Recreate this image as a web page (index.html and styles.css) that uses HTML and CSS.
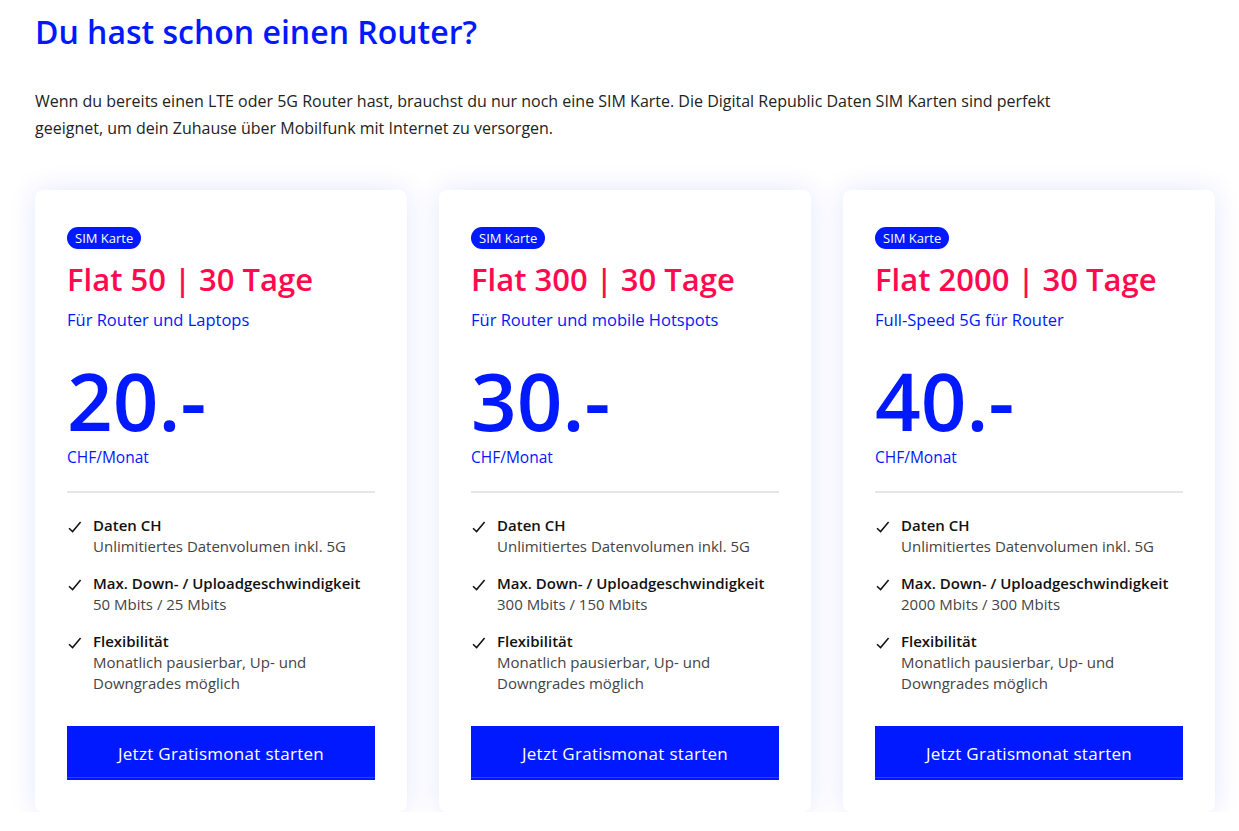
FILE: index.html
```html
<!DOCTYPE html>
<html lang="de">

<head>
  <meta charset="UTF-8">
  <title>Du hast schon einen Router?</title>
  <link rel="stylesheet" href="styles.css">
</head>

<body>
  <section class="router-section">
    <h1 class="section-title">Du hast schon einen Router?</h1>
    <p class="section-intro">Wenn du bereits einen LTE oder 5G Router hast, brauchst du nur noch eine SIM Karte. Die Digital Republic Daten SIM Karten sind perfekt geeignet, um dein Zuhause über Mobilfunk mit Internet zu versorgen.</p>

    <div class="plans">
      <div class="plan-card">
        <span class="badge">SIM Karte</span>
        <h2 class="plan-name">Flat 50 | 30 Tage</h2>
        <p class="plan-sub">Für Router und Laptops</p>
        <div class="price">20.-</div>
        <div class="price-unit">CHF/Monat</div>
        <ul class="features">
          <li>
            <svg class="check" viewBox="0 0 16 16"><path d="M2 9.2 L5.6 12.6 L13.6 3"/></svg>
            <div><strong>Daten CH</strong><span>Unlimitiertes Datenvolumen inkl. 5G</span></div>
          </li>
          <li>
            <svg class="check" viewBox="0 0 16 16"><path d="M2 9.2 L5.6 12.6 L13.6 3"/></svg>
            <div><strong>Max. Down- / Uploadgeschwindigkeit</strong><span>50 Mbits / 25 Mbits</span></div>
          </li>
          <li>
            <svg class="check" viewBox="0 0 16 16"><path d="M2 9.2 L5.6 12.6 L13.6 3"/></svg>
            <div><strong>Flexibilität</strong><span>Monatlich pausierbar, Up- und Downgrades möglich</span></div>
          </li>
        </ul>
        <button class="button">Jetzt Gratismonat starten</button>
      </div>

      <div class="plan-card">
        <span class="badge">SIM Karte</span>
        <h2 class="plan-name">Flat 300 | 30 Tage</h2>
        <p class="plan-sub">Für Router und mobile Hotspots</p>
        <div class="price">30.-</div>
        <div class="price-unit">CHF/Monat</div>
        <ul class="features">
          <li>
            <svg class="check" viewBox="0 0 16 16"><path d="M2 9.2 L5.6 12.6 L13.6 3"/></svg>
            <div><strong>Daten CH</strong><span>Unlimitiertes Datenvolumen inkl. 5G</span></div>
          </li>
          <li>
            <svg class="check" viewBox="0 0 16 16"><path d="M2 9.2 L5.6 12.6 L13.6 3"/></svg>
            <div><strong>Max. Down- / Uploadgeschwindigkeit</strong><span>300 Mbits / 150 Mbits</span></div>
          </li>
          <li>
            <svg class="check" viewBox="0 0 16 16"><path d="M2 9.2 L5.6 12.6 L13.6 3"/></svg>
            <div><strong>Flexibilität</strong><span>Monatlich pausierbar, Up- und Downgrades möglich</span></div>
          </li>
        </ul>
        <button class="button">Jetzt Gratismonat starten</button>
      </div>

      <div class="plan-card">
        <span class="badge">SIM Karte</span>
        <h2 class="plan-name">Flat 2000 | 30 Tage</h2>
        <p class="plan-sub">Full-Speed 5G für Router</p>
        <div class="price">40.-</div>
        <div class="price-unit">CHF/Monat</div>
        <ul class="features">
          <li>
            <svg class="check" viewBox="0 0 16 16"><path d="M2 9.2 L5.6 12.6 L13.6 3"/></svg>
            <div><strong>Daten CH</strong><span>Unlimitiertes Datenvolumen inkl. 5G</span></div>
          </li>
          <li>
            <svg class="check" viewBox="0 0 16 16"><path d="M2 9.2 L5.6 12.6 L13.6 3"/></svg>
            <div><strong>Max. Down- / Uploadgeschwindigkeit</strong><span>2000 Mbits / 300 Mbits</span></div>
          </li>
          <li>
            <svg class="check" viewBox="0 0 16 16"><path d="M2 9.2 L5.6 12.6 L13.6 3"/></svg>
            <div><strong>Flexibilität</strong><span>Monatlich pausierbar, Up- und Downgrades möglich</span></div>
          </li>
        </ul>
        <button class="button">Jetzt Gratismonat starten</button>
      </div>
    </div>
  </section>
</body>

</html>
```

FILE: styles.css
```css
body {
  margin: 0;
  background: #fff;
  font-family: "Open Sans", "Liberation Sans", sans-serif;
  color: #222;
}

.router-section {
  padding: 11px 24px 0 35px;
}

.section-title {
  margin: 0;
  font-size: 32px;
  line-height: 42px;
  font-weight: 600;
  color: #0019ff;
}

.section-intro {
  margin: 35px 0 0;
  max-width: 1060px;
  font-size: 16px;
  line-height: 27px;
  color: #222;
}

.plans {
  display: flex;
  gap: 32px;
  margin-top: 48px;
}

.plan-card {
  width: 308px;
  padding: 36px 32px 32px;
  background: #fff;
  border-radius: 8px;
  box-shadow: 0 0 28px rgba(0, 25, 255, 0.11);
}

.badge {
  display: inline-block;
  padding: 0 8px;
  height: 22px;
  line-height: 22px;
  border-radius: 11px;
  background: #0019ff;
  color: #fff;
  font-size: 13px;
}

.plan-name {
  margin: 9px 0 0;
  font-size: 31px;
  line-height: 42px;
  font-weight: 600;
  color: #ff0a4e;
}

.plan-sub {
  margin: 9px 0 0;
  font-size: 16.5px;
  line-height: 22px;
  font-weight: 500;
  color: #0019ff;
}

.price {
  margin-top: 29px;
  font-size: 80px;
  line-height: 80px;
  font-weight: 600;
  color: #0019ff;
}

.price-unit {
  margin-top: 7px;
  font-size: 15.5px;
  line-height: 20px;
  font-weight: 500;
  color: #0019ff;
}

.features {
  list-style: none;
  margin: 24px 0 0;
  padding: 22px 0 0;
  border-top: 2px solid #e6e6e6;
}

.features li {
  display: flex;
  gap: 10px;
  margin-bottom: 16px;
  font-size: 15px;
  line-height: 21px;
}

.features li div {
  display: flex;
  flex-direction: column;
}

.features strong {
  font-weight: 600;
  color: #111;
}

.features span {
  color: #444;
}

.check {
  flex: none;
  width: 16px;
  height: 16px;
  margin-top: 4px;
  fill: none;
  stroke: #111;
  stroke-width: 1.5;
}

.button {
  display: block;
  width: 100%;
  height: 54px;
  margin-top: 32px;
  border: none;
  background: #0019ff;
  box-shadow: inset 0 -2px 0 #0019ff, inset 0 -3px 0 #2b40ff;
  color: #fff;
  font-family: inherit;
  font-size: 17px;
  font-weight: 500;
  letter-spacing: 0.3px;
  cursor: pointer;
}
```
